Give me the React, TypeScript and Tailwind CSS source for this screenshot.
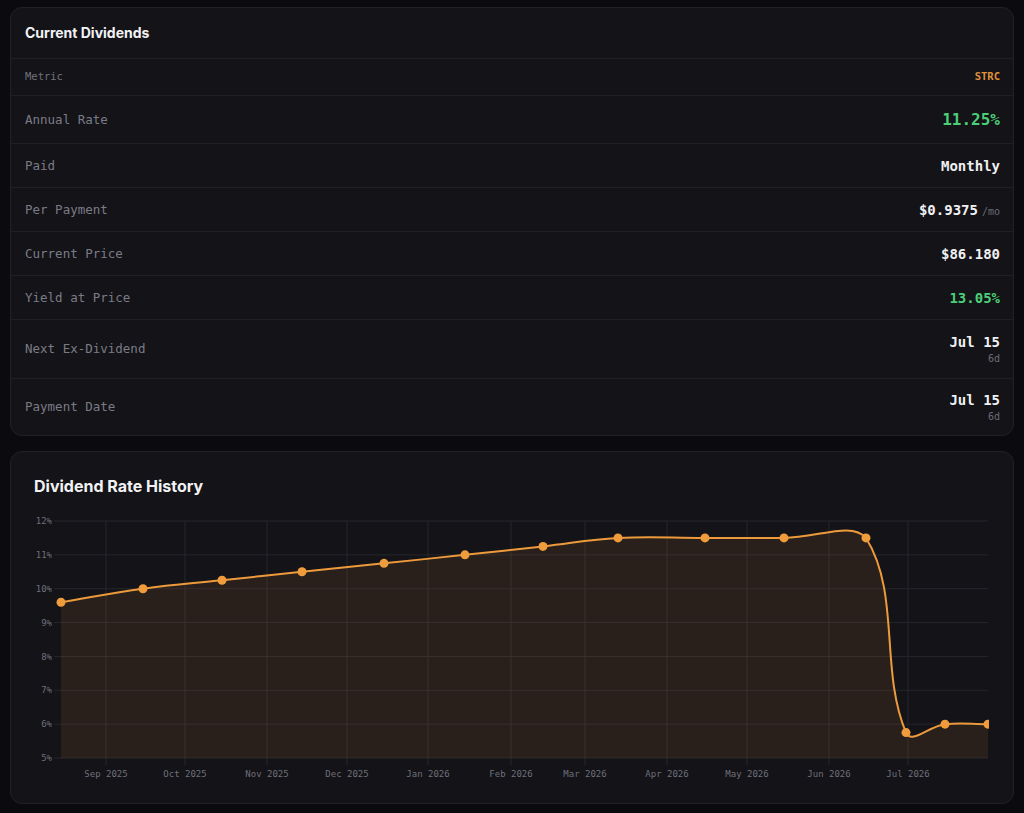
import React from "react";

const MONO = { fontFamily: '"DejaVu Sans Mono", "Liberation Mono", monospace' };
const SANS = { fontFamily: 'Inter, "Noto Sans", sans-serif' };

const OX = 34;
const OY = 510;
const yS = (v: number) => 758 - (v - 5) * (237 / 7) - OY;
const PLOT_L = 61 - OX;
const PLOT_R = 988 - OX;
const PLOT_T = yS(12);
const PLOT_B = yS(5);

const data: [number, number][] = [
  [61, 9.6],
  [143, 10],
  [222, 10.25],
  [302, 10.5],
  [384, 10.75],
  [465, 11],
  [543, 11.25],
  [618, 11.5],
  [705, 11.5],
  [784, 11.5],
  [866, 11.5],
  [906, 5.75],
  [945, 6],
  [988, 6],
];

const ticks: [number, string][] = [
  [106, "Sep 2025"],
  [185, "Oct 2025"],
  [267, "Nov 2025"],
  [347, "Dec 2025"],
  [428, "Jan 2026"],
  [511, "Feb 2026"],
  [585, "Mar 2026"],
  [667, "Apr 2026"],
  [747, "May 2026"],
  [829, "Jun 2026"],
  [908, "Jul 2026"],
];

function buildPath() {
  const pts = data.map(([x, v]) => ({ x: x - OX, y: yS(v) }));
  const t = 0.4;
  const cps = pts.map((c, i) => {
    const p = pts[i - 1] || c;
    const n = pts[i + 1] || c;
    const d01 = Math.hypot(c.x - p.x, c.y - p.y);
    const d12 = Math.hypot(n.x - c.x, n.y - c.y);
    let s01 = d01 / (d01 + d12);
    let s12 = d12 / (d01 + d12);
    if (isNaN(s01)) s01 = 0;
    if (isNaN(s12)) s12 = 0;
    const fa = t * s01;
    const fb = t * s12;
    const clampX = (x: number) => Math.min(Math.max(x, PLOT_L), PLOT_R);
    const clampY = (y: number) => Math.min(Math.max(y, PLOT_T), PLOT_B);
    return {
      prev: { x: clampX(c.x - fa * (n.x - p.x)), y: clampY(c.y - fa * (n.y - p.y)) },
      next: { x: clampX(c.x + fb * (n.x - p.x)), y: clampY(c.y + fb * (n.y - p.y)) },
    };
  });
  let d = `M ${pts[0].x} ${pts[0].y}`;
  for (let i = 1; i < pts.length; i++) {
    const a = cps[i - 1].next;
    const b = cps[i].prev;
    d += ` C ${a.x} ${a.y} ${b.x} ${b.y} ${pts[i].x} ${pts[i].y}`;
  }
  return { d, pts };
}

function Chart() {
  const { d, pts } = buildPath();
  const last = pts[pts.length - 1];
  const area = `${d} L ${last.x} ${PLOT_B} L ${pts[0].x} ${PLOT_B} Z`;
  const levels = [5, 6, 7, 8, 9, 10, 11, 12];
  return (
    <svg width={955} height={275} className="block" style={MONO}>
      {levels.map((l) => (
        <g key={l}>
          <line x1={PLOT_L - 7} x2={PLOT_R} y1={yS(l)} y2={yS(l)} stroke="#26262d" strokeWidth={1} />
          <text x={18} y={yS(l) + 3.2} textAnchor="end" fontSize={9} fill="#70707a">
            {l}%
          </text>
        </g>
      ))}
      {ticks.map(([x, label]) => (
        <g key={label}>
          <line x1={x - OX} x2={x - OX} y1={PLOT_T} y2={PLOT_B + 7} stroke="#26262d" strokeWidth={1} />
          <text x={x - OX} y={266.5} textAnchor="middle" fontSize={9} fill="#70707a">
            {label}
          </text>
        </g>
      ))}
      <path d={area} fill="#e8963a" fillOpacity={0.1} />
      <path d={d} fill="none" stroke="#ec9a3c" strokeWidth={2} />
      {pts.map((p, i) => (
        <circle key={i} cx={p.x} cy={p.y} r={4.5} fill="#ef9c3c" />
      ))}
    </svg>
  );
}

function Row({
  label,
  h,
  last,
  children,
}: {
  label: string;
  h: string;
  last?: boolean;
  children: React.ReactNode;
}) {
  return (
    <div
      className={`flex items-center justify-between pl-[14px] pr-[13px] pt-[1px] ${h} ${
        last ? "" : "border-b border-[#1f1f26]"
      }`}
    >
      <span className="text-[12.5px] text-[#7b7b86]" style={MONO}>
        {label}
      </span>
      <div className="flex flex-col items-end" style={MONO}>
        {children}
      </div>
    </div>
  );
}

export default function App() {
  return (
    <div className="min-h-[813px] bg-[#0b0b0f] px-[10px] pt-[7px] pb-[9px] flex flex-col gap-[15px]">
      <div className="rounded-xl border border-[#212128] bg-[#131318] overflow-hidden">
        <div className="h-[51px] flex items-center px-[14px] pb-[2px] border-b border-[#1f1f26]">
          <span className="text-[14px] font-bold text-[#f2f2f4]" style={SANS}>
            Current Dividends
          </span>
        </div>
        <div
          className="h-[37px] flex items-center justify-between pl-[14px] pr-[13px] border-b border-[#1f1f26]"
          style={MONO}
        >
          <span className="text-[10.5px] text-[#72727c]">Metric</span>
          <span className="text-[10.5px] font-bold text-[#e0913a]">STRC</span>
        </div>
        <Row label="Annual Rate" h="h-[48px]">
          <span className="text-[16px] font-bold text-[#4ccd77]">11.25%</span>
        </Row>
        <Row label="Paid" h="h-[44px]">
          <span className="text-[14px] font-bold text-[#f0f0f2]">Monthly</span>
        </Row>
        <Row label="Per Payment" h="h-[44px]">
          <span className="flex items-baseline gap-[4px]">
            <span className="text-[14px] font-bold text-[#f0f0f2]">$0.9375</span>
            <span className="text-[10px] text-[#6c6c76]">/mo</span>
          </span>
        </Row>
        <Row label="Current Price" h="h-[44px]">
          <span className="text-[14px] font-bold text-[#f0f0f2]">$86.180</span>
        </Row>
        <Row label="Yield at Price" h="h-[44px]">
          <span className="text-[14px] font-bold text-[#4ccd77]">13.05%</span>
        </Row>
        <Row label="Next Ex-Dividend" h="h-[59px]">
          <span className="text-[14px] font-bold text-[#f0f0f2] leading-[18px]">Jul 15</span>
          <span className="text-[10px] text-[#6c6c76] leading-[16px]">6d</span>
        </Row>
        <Row label="Payment Date" h="h-[56px]" last>
          <span className="text-[14px] font-bold text-[#f0f0f2] leading-[18px]">Jul 15</span>
          <span className="text-[10px] text-[#6c6c76] leading-[16px]">6d</span>
        </Row>
      </div>
      <div className="rounded-xl border border-[#212128] bg-[#131318] px-[23px] pt-[24px] pb-[18px]">
        <div className="h-[20px] flex items-center text-[16px] font-bold text-[#f2f2f4]" style={SANS}>
          Dividend Rate History
        </div>
        <div className="mt-[14px]">
          <Chart />
        </div>
      </div>
    </div>
  );
}
